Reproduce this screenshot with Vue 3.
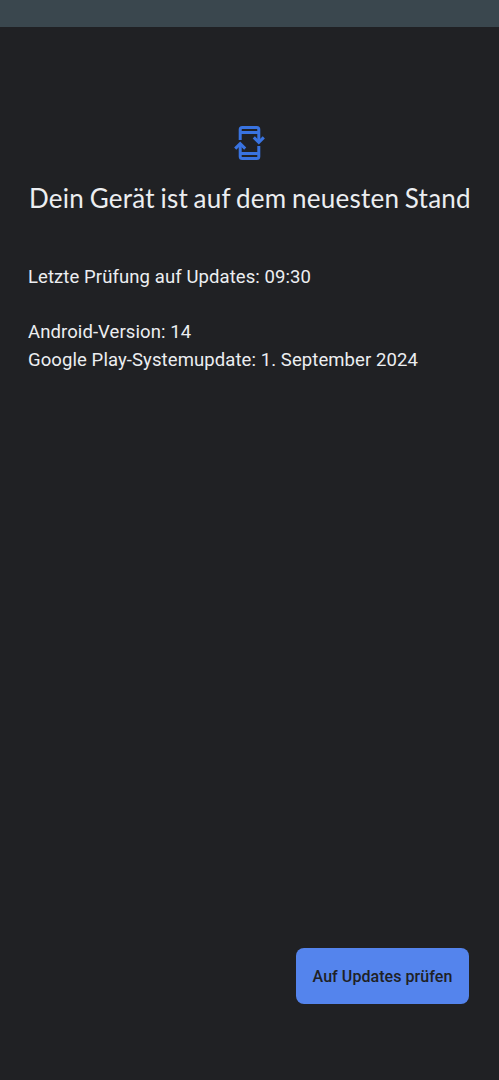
<script setup>
const title = 'Dein Gerät ist auf dem neuesten Stand'
</script>

<template>
  <div class="screen">
    <div class="statusbar"></div>
    <main class="content">
      <svg class="icon" viewBox="0 0 31 34" fill="none" stroke="#3973e0" stroke-width="3">
        <path d="M6.2 14V3.5Q6.2 1.5 8.2 1.5H22.8Q24.8 1.5 24.8 3.5V16M6.2 6.6H24.8" />
        <path d="M6.2 18V30.5Q6.2 32.5 8.2 32.5H22.8Q24.8 32.5 24.8 30.5V20M6.2 27.4H24.8" />
        <path d="M19.8 11.4L24.8 16.4L29.8 11.4M1.2 22.6L6.2 17.6L11.2 22.6" />
      </svg>
      <h1 class="title">{{ title }}</h1>
      <div class="details">
        <p class="line checked">Letzte Prüfung auf Updates: 09:30</p>
        <p class="line">Android-Version: 14</p>
        <p class="line">Google Play-Systemupdate: 1. September 2024</p>
      </div>
    </main>
    <footer class="footer">
      <button class="button">Auf Updates prüfen</button>
    </footer>
  </div>
</template>

<style>
body { background: #202124; }
</style>
<style scoped>
.screen { height: 1080px; display: flex; flex-direction: column; background: #202124; color: #eceef1; font-family: Roboto, sans-serif; }
.statusbar { height: 27px; background: #3a474e; }
.content { flex: 1; display: flex; flex-direction: column; }
.icon { width: 31px; height: 34px; margin: 99px auto 0; overflow: visible; }
.title { margin: 20px 0 0 29px; font: 400 26px/36px Lato, sans-serif; letter-spacing: 0.25px; word-spacing: -1.3px; white-space: nowrap; }
.details { margin: 47px 28px 0; }
.line { margin: 0; font-size: 18.5px; line-height: 28px; letter-spacing: 0.09px; white-space: nowrap; }
.checked { margin-bottom: 27px; }
.footer { display: flex; justify-content: flex-end; padding: 0 30px 76px 0; }
.button { width: 173px; height: 56px; border: 0; border-radius: 8px; padding: 0; background: #5484ed; color: #202124; font: 500 16px Roboto, sans-serif; letter-spacing: 0.06px; }
</style>
